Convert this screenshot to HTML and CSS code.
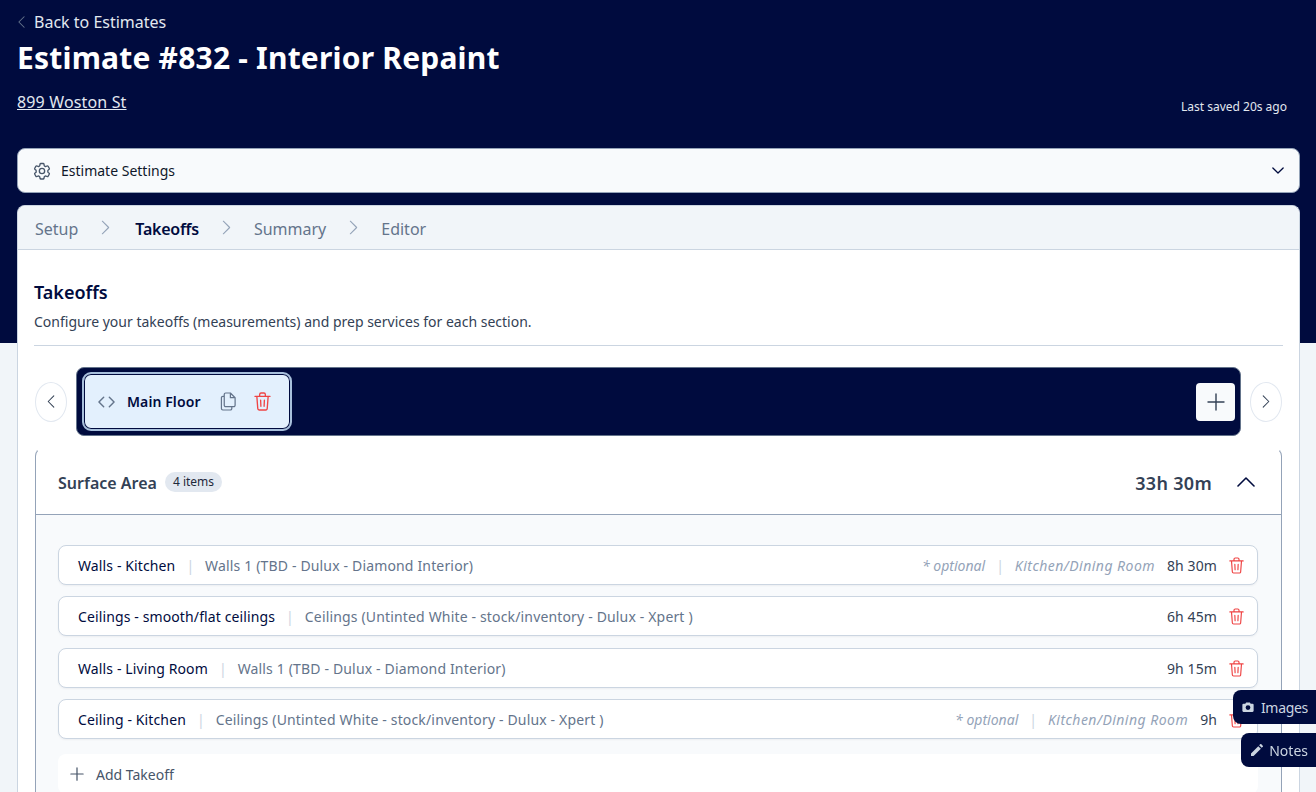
FILE: index.html
```html
<!DOCTYPE html>
<html lang="en">
<head>
<meta charset="utf-8">
<title>Estimate #832</title>
<link rel="stylesheet" href="styles.css">
</head>
<body>
<div class="page">
  <header class="hero">
    <a class="back"><svg class="back-ic" viewBox="0 0 10 16"><path d="M8 2 2 8l6 6"/></svg>Back to Estimates</a>
    <h1>Estimate #832 - Interior Repaint</h1>
    <div class="hero-row">
      <a class="address">899 Woston St</a>
      <span class="saved">Last saved 20s ago</span>
    </div>
  </header>
  <section class="settings">
    <svg class="gear" viewBox="0 0 24 24"><path d="M9.600 3.900c.1-.5.6-.9 1.100-.9h2.600c.5 0 1 .4 1.100.9l.2 1.300c.1.4.3.7.6.9l.6.3c.3.2.7.2 1 .1l1.200-.5c.5-.2 1.100 0 1.400.5l1.300 2.200c.3.5.1 1.100-.3 1.400l-1 .8c-.3.2-.5.6-.4 1v.8c0 .4.1.7.4 1l1 .8c.4.3.6.9.3 1.400l-1.300 2.200c-.3.5-.9.7-1.400.5l-1.200-.5c-.3-.1-.7-.1-1 .1l-.6.3c-.3.2-.5.5-.6.9l-.2 1.300c-.1.5-.6.9-1.100.9h-2.600c-.5 0-1-.4-1.100-.9l-.2-1.300c-.1-.4-.3-.7-.6-.9l-.6-.3c-.3-.2-.7-.2-1-.1l-1.200.5c-.5.2-1.100 0-1.400-.5l-1.300-2.200c-.3-.5-.1-1.100.3-1.400l1-.8c.3-.2.5-.6.4-1v-.8c0-.4-.1-.7-.4-1l-1-.8c-.4-.3-.6-.9-.3-1.400l1.300-2.200c.3-.5.9-.7 1.400-.5l1.200.5c.3.1.7.1 1-.1l.6-.3c.3-.2.5-.5.6-.9z"/><circle cx="12" cy="12" r="3.200"/></svg>
    <span class="settings-label">Estimate Settings</span>
    <svg class="settings-chev" viewBox="0 0 14 8"><path d="m1 1 6 6 6-6"/></svg>
  </section>
  <main class="card">
    <nav class="steps">
      <span class="step">Setup</span>
      <svg class="step-sep" viewBox="0 0 10 16"><path d="m1.500 1 7 7-7 7"/></svg>
      <span class="step active">Takeoffs</span>
      <svg class="step-sep" viewBox="0 0 10 16"><path d="m1.500 1 7 7-7 7"/></svg>
      <span class="step">Summary</span>
      <svg class="step-sep" viewBox="0 0 10 16"><path d="m1.500 1 7 7-7 7"/></svg>
      <span class="step">Editor</span>
    </nav>
    <div class="content">
      <h2>Takeoffs</h2>
      <p class="sub">Configure your takeoffs (measurements) and prep services for each section.</p>
      <hr class="divider">
      <div class="tabs-row">
        <button class="round"><svg viewBox="0 0 10 16"><path d="M8.500 1 1.500 8l7 7"/></svg></button>
        <div class="tabs">
          <div class="tab">
            <svg class="code-ic" viewBox="0 0 18 12"><path d="M6 1 1 6l5 5M12 1l5 5-5 5"/></svg>
            <span class="tab-name">Main Floor</span>
            <svg class="copy-ic" viewBox="0 0 18 20"><path d="M6 1h5l5 5v8a1.500 1.500 0 0 1-1.500 1.500H6A1.500 1.500 0 0 1 4.500 14V2.500A1.500 1.500 0 0 1 6 1zM11 1v5h5M4.500 4.500H3A1.500 1.500 0 0 0 1.500 6v11.500A1.500 1.500 0 0 0 3 19h8a1.500 1.500 0 0 0 1.500-1.500v-2"/></svg>
            <svg class="trash big" viewBox="0 0 18 20"><use href="#trash"/></svg>
          </div>
          <button class="add-tab"><svg viewBox="0 0 18 18"><path d="M9 1v16M1 9h16"/></svg></button>
        </div>
        <button class="round"><svg viewBox="0 0 10 16"><path d="m1.500 1 7 7-7 7"/></svg></button>
      </div>
      <section class="panel">
        <div class="panel-head">
          <span class="panel-title">Surface Area</span>
          <span class="pill">4 items</span>
          <span class="total">33h 30m</span>
          <svg class="panel-chev" viewBox="0 0 18 10"><path d="m1 9 8-8 8 8"/></svg>
        </div>
        <div class="panel-body">
          <div class="row">
            <span class="name">Walls - Kitchen</span><span class="bar">|</span><span class="desc">Walls 1 (TBD - Dulux - Diamond Interior)</span>
            <span class="meta"><em>* optional</em><span class="bar">|</span><em class="room">Kitchen/Dining Room</em></span>
            <span class="time">8h 30m</span><svg class="trash" viewBox="0 0 18 20"><use href="#trash"/></svg>
          </div>
          <div class="row">
            <span class="name">Ceilings - smooth/flat ceilings</span><span class="bar">|</span><span class="desc">Ceilings (Untinted White - stock/inventory - Dulux - Xpert )</span>
            <span class="meta"></span>
            <span class="time">6h 45m</span><svg class="trash" viewBox="0 0 18 20"><use href="#trash"/></svg>
          </div>
          <div class="row">
            <span class="name">Walls - Living Room</span><span class="bar">|</span><span class="desc">Walls 1 (TBD - Dulux - Diamond Interior)</span>
            <span class="meta"></span>
            <span class="time">9h 15m</span><svg class="trash" viewBox="0 0 18 20"><use href="#trash"/></svg>
          </div>
          <div class="row">
            <span class="name">Ceiling - Kitchen</span><span class="bar">|</span><span class="desc">Ceilings (Untinted White - stock/inventory - Dulux - Xpert )</span>
            <span class="meta"><em>* optional</em><span class="bar">|</span><em class="room">Kitchen/Dining Room</em></span>
            <span class="time">9h</span><svg class="trash" viewBox="0 0 18 20"><use href="#trash"/></svg>
          </div>
          <div class="add-row"><svg viewBox="0 0 16 16"><path d="M8 1v14M1 8h14"/></svg>Add Takeoff</div>
        </div>
      </section>
    </div>
  </main>
</div>
<a class="float images"><svg viewBox="0 0 16 14"><path d="M5.500 1 4.400 2.500H2A1.500 1.500 0 0 0 .5 4v8A1.500 1.500 0 0 0 2 13.500h12a1.500 1.500 0 0 0 1.500-1.500V4A1.500 1.500 0 0 0 14 2.500h-2.400L10.500 1zM8 4.500a3.200 3.200 0 1 1 0 6.400 3.200 3.200 0 0 1 0-6.400z" fill-rule="evenodd"/></svg>Images</a>
<a class="float notes"><svg viewBox="0 0 14 14"><path d="M0 14v-3L8.500 2.500l3 3L3 14zM9.500 1.500 10.700.3a1 1 0 0 1 1.400 0l1.600 1.600a1 1 0 0 1 0 1.400l-1.200 1.200z"/></svg>Notes</a>
<svg class="defs" aria-hidden="true"><defs><g id="trash"><path d="M1 4.500h16M6 4.500V2.500A1.500 1.500 0 0 1 7.500 1h3A1.500 1.500 0 0 1 12 2.500v2M3 4.500l1 13a1.500 1.500 0 0 0 1.500 1.500h7a1.500 1.500 0 0 0 1.500-1.500l1-13M7 8.500l.3 6.500M11 8.500l-.3 6.500"/></g></defs></svg>
</body>
</html>
```
FILE: styles.css
```css
* { box-sizing: border-box; }
html, body { margin: 0; height: 100%; overflow: hidden; }
body {
  font-family: "Noto Sans", "Open Sans", sans-serif;
  font-size: 14px;
  color: #0f172a;
  background: #f1f5f9;
}
.defs { width: 0; height: 0; position: absolute; }
svg { fill: none; stroke: currentColor; stroke-linecap: round; stroke-linejoin: round; flex: none; }
.page {
  height: 792px;
  overflow: hidden;
  padding: 0 16px 0 17px;
  background: linear-gradient(#000b3e 343px, #f1f5f9 343px);
}
.hero { height: 148px; color: #fff; padding-top: 10px; }
.back { display: flex; align-items: center; font-size: 16px; line-height: 24px; color: #e2e8f0; }
.back-ic { width: 9px; height: 14px; margin-right: 8px; color: #64748b; stroke-width: 1.2; }
h1 { margin: 0; font-size: 30px; line-height: 36px; margin-top: 6px; font-weight: 700; color: #fff; letter-spacing: .2px; }
.hero-row { display: flex; justify-content: space-between; align-items: flex-end; margin-top: 14px; padding-right: 13px; }
.address { font-size: 16px; line-height: 24px; text-decoration: underline; color: #e2e8f0; letter-spacing: .15px; }
.saved { font-size: 12px; line-height: 16px; color: #e2e8f0; margin-bottom: -1px; }
.settings {
  height: 45px;
  display: flex;
  align-items: center;
  padding: 0 15px 0 14px;
  background: #f8fafc;
  border: 1px solid #94a3b8;
  border-radius: 8px;
}
.gear { width: 20px; height: 20px; color: #475569; stroke-width: 1.6; margin-right: 9px; }
.settings-label { font-size: 14px; color: #0f172a; }
.settings-chev { width: 12px; height: 7px; margin-left: auto; color: #000b3e; stroke-width: 1.5; }
.card {
  margin-top: 12px;
  background: #fff;
  border-radius: 8px 8px 0 0;
  border: 1px solid #cbd5e1;
  border-bottom: 0;
}
.steps {
  height: 44px;
  display: flex;
  align-items: center;
  gap: 23px;
  padding: 0 17px;
  background: #f1f5f9;
  border-bottom: 1px solid #cbd5e1;
  border-radius: 8px 8px 0 0;
}
.step { font-size: 16px; line-height: 24px; padding-top: 2px; color: #64748b; }
.step.active { color: #000b3e; font-weight: 600; letter-spacing: -.25px; margin-left: 2px; }
.step-sep { width: 9px; height: 15px; color: #94a3b8; stroke-width: 1.2; }
.content { padding: 29px 16px 0; }
h2 { margin: 0; font-size: 18px; line-height: 26px; font-weight: 600; color: #000b3e; }
.sub { margin: 7px 0 0; font-size: 14px; line-height: 20px; color: #334155; }
.divider { border: 0; border-top: 1px solid #cbd5e1; margin: 13px 0 21px; }
.tabs-row { display: flex; align-items: center; gap: 9px; padding: 0 1px; }
.round {
  width: 32px;
  height: 40px;
  padding: 0;
  display: grid;
  place-items: center;
  background: #fff;
  border: 1px solid #e2e8f0;
  border-radius: 50%;
  color: #334155;
  flex: none;
}
.round svg { width: 8px; height: 13px; stroke-width: 1.3; }
.tabs {
  flex: 1;
  height: 69px;
  display: flex;
  align-items: center;
  justify-content: space-between;
  padding: 0 5px 0 6px;
  background: #000b3e;
  border: 1px solid #64748b;
  border-radius: 8px;
}
.tab {
  width: 208px;
  height: 57px;
  display: flex;
  align-items: center;
  padding-left: 14px;
  background: #e3f0fd;
  border: 1px solid #000b3e;
  outline: 2px solid #a8c0dc;
  outline-offset: -1px;
  box-shadow: inset 0 0 0 1px #000b3e;
  border-radius: 8px;
}
.code-ic { width: 17px; height: 12px; color: #64748b; stroke-width: 1.5; margin-right: 12px; }
.tab-name { font-size: 14px; font-weight: 600; color: #000b3e; width: 93px; letter-spacing: .1px; }
.copy-ic { width: 17px; height: 19px; color: #64748b; stroke-width: 1.3; margin-right: 17px; }
.trash { width: 15px; height: 17px; color: #ef4444; stroke-width: 1.4; }
.trash.big { width: 17px; height: 19px; }
.add-tab {
  width: 39px;
  height: 38px;
  padding: 0;
  display: grid;
  place-items: center;
  background: #f8fafc;
  border: 0;
  border-radius: 4px;
  color: #334155;
}
.add-tab svg { width: 18px; height: 18px; stroke-width: 1.4; }
.panel {
  margin: 12px 1px 0;
  border: 1px solid #94a3b8;
  border-top-color: #fff;
  border-bottom: 0;
  border-radius: 8px 8px 0 0;
  background: #fff;
}
.panel-head {
  height: 66px;
  display: flex;
  align-items: center;
  padding: 0 26px 0 22px;
  border-bottom: 1px solid #94a3b8;
}
.panel-title { font-size: 16px; font-weight: 600; color: #334155; padding-top: 2px; }
.pill { margin-left: 8px; padding: 0 8px; font-size: 12px; line-height: 20px; border-radius: 10px; background: #e2e8f0; color: #1e293b; }
.total { margin-left: auto; font-size: 18px; font-weight: 600; color: #334155; letter-spacing: .3px; padding-top: 2px; }
.panel-chev { width: 18px; height: 10px; margin-left: 25px; color: #000b3e; stroke-width: 1.6; }
.panel-body { padding: 30px 23px 0 22px; background: #f8fafc; height: 300px; display: flex; flex-direction: column; gap: 11.330px; }
.row {
  height: 40px;
  flex: none;
  display: flex;
  align-items: center;
  padding: 1px 13px 0 19px;
  background: #fff;
  border: 1px solid #cbd5e1;
  border-radius: 8px;
  font-size: 14px;
  box-shadow: 0 1px 2px rgba(15, 23, 42, .05);
}
.name { color: #000b3e; letter-spacing: .12px; }
.bar { margin: 0 11px; color: #cbd5e1; }
.desc { color: #64748b; letter-spacing: .16px; }
.meta { margin-left: auto; display: flex; color: #94a3b8; }
.room { letter-spacing: .47px; }
.time { margin-left: 12px; margin-right: 12px; color: #334155; letter-spacing: .1px; }
.add-row {
  margin-top: 4px;
  height: 40px;
  flex: none;
  display: flex;
  align-items: center;
  padding-left: 12px;
  background: #fff;
  border-radius: 8px;
  color: #475569;
  font-size: 14px;
}
.add-row svg { width: 14px; height: 14px; stroke-width: 1.4; margin-right: 12px; color: #475569; }
.float {
  position: fixed;
  right: 0;
  display: flex;
  align-items: center;
  height: 34px;
  padding-left: 9px;
  padding-right: 8px;
  background: #000b3e;
  border-radius: 8px 0 0 8px;
  color: #cbd5e1;
  font-size: 14px;
}
.float svg { fill: #cbd5e1; stroke: none; width: 12px; height: 12px; margin-right: 7px; }
.images { top: 690px; letter-spacing: -.3px; }
.notes { top: 733px; padding-left: 10px; }
.notes svg { margin-right: 6px; }
```
